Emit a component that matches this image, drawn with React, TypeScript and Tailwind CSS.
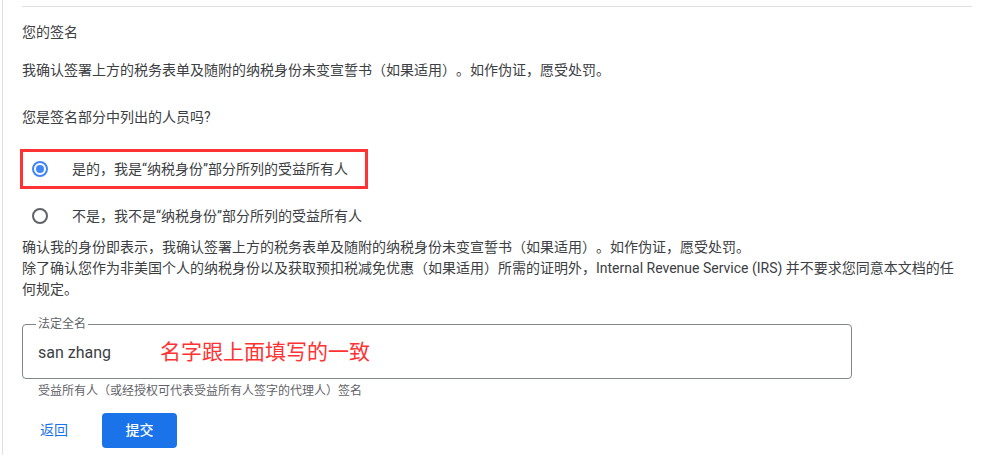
import React from "react";

// Signature step of a tax form: confirmation text, beneficial-owner radio,
// legal name field and the back / submit actions.

const FONT = 'Roboto, "Noto Sans CJK SC", sans-serif';

function Radio({ checked }: { checked?: boolean }) {
  return (
    <span
      className={
        "flex h-[16px] w-[16px] shrink-0 items-center justify-center rounded-full border-2 " +
        (checked ? "border-[#4285f4]" : "border-[#5f6368]")
      }
    >
      {checked && <span className="h-[8px] w-[8px] rounded-full bg-[#4285f4]" />}
    </span>
  );
}

export default function App() {
  return (
    <div
      className="h-[465px] bg-white pl-[2px] text-[14px] text-[#3c4043] [text-spacing-trim:space-all]"
      style={{ fontFamily: FONT }}
    >
      <div className="h-[455px] border-l border-[#e0e0e0] pl-[19px] pr-[22px]">
        <div className="pt-[6px]">
          <div className="border-t border-[#e0e0e0]" />
        </div>

        <p className="mt-[15px] leading-[21px]">您的签名</p>
        <p className="mt-[17px] leading-[21px]">
          我确认签署上方的税务表单及随附的纳税身份未变宣誓书（如果适用）。如作伪证，愿受处罚。
        </p>

        <p className="mt-[26px] leading-[21px]">您是签名部分中列出的人员吗?</p>

        <div className="-ml-[2px] mt-[21px] w-[348px] border-[3px] border-[#ff3333]">
          <label className="flex h-[34px] items-center pl-[9px]">
            <Radio checked />
            <span className="ml-[24px]">是的，我是“纳税身份”部分所列的受益所有人</span>
          </label>
        </div>
        <label className="mt-[10px] flex h-[34px] items-center pl-[10px]">
          <Radio />
          <span className="ml-[24px]">不是，我不是“纳税身份”部分所列的受益所有人</span>
        </label>

        <div className="mt-[4px] pr-[8px] leading-[21px]">
          <p>确认我的身份即表示，我确认签署上方的税务表单及随附的纳税身份未变宣誓书（如果适用）。如作伪证，愿受处罚。</p>
          <p>
            除了确认您作为非美国个人的纳税身份以及获取预扣税减免优惠（如果适用）所需的证明外，Internal Revenue
            Service (IRS) 并不要求您同意本文档的任何规定。
          </p>
        </div>

        <fieldset className="mt-[17px] w-[830px] rounded-[4px] border border-[#80868b] pl-[13px]">
          <legend className="px-[2px] text-[12px] leading-[14px] text-[#5f6368]">法定全名</legend>
          <div className="flex h-[44px] items-center pl-[2px]">
            <span className="text-[16px] text-[#3c4043]">san zhang</span>
            <span className="ml-[49px] text-[21px] text-[#ff3333]">名字跟上面填写的一致</span>
          </div>
          <div className="h-[3px]" />
        </fieldset>

        <p className="mt-[4px] pl-[16px] text-[12px] leading-[16px] text-[#5f6368]">
          受益所有人（或经授权可代表受益所有人签字的代理人）签名
        </p>

        <div className="mt-[14px] flex items-center">
          <button className="ml-[18px] text-[14px] text-[#1a73e8]">返回</button>
          <button className="ml-[34px] h-[35px] w-[75px] rounded-[4px] bg-[#1a73e8] text-[14px] font-medium text-white">
            提交
          </button>
        </div>
      </div>
    </div>
  );
}
